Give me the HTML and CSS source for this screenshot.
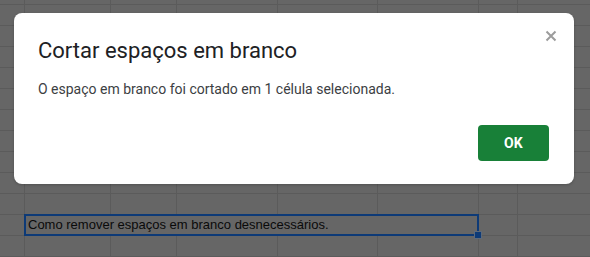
FILE: index.html
```html
<!DOCTYPE html>
<html lang="pt">
<head>
<meta charset="utf-8">
<title>Cortar espaços em branco</title>
<link rel="stylesheet" href="styles.css">
</head>
<body>
<div class="sheet">
  <div class="cell-selected">Como remover espaços em branco desnecessários.<span class="handle"></span></div>
</div>
<div class="dialog" role="dialog">
  <h1 class="dialog-title">Cortar espaços em branco</h1>
  <p class="dialog-body">O espaço em branco foi cortado em 1 célula selecionada.</p>
  <div class="dialog-actions"><button class="btn-ok">OK</button></div>
  <button class="dialog-close" aria-label="Fechar">
    <svg viewBox="0 0 12 12" width="12" height="12"><path d="M1.5 1.5 L10.5 10.5 M10.5 1.5 L1.5 10.5" stroke="#9c9c9c" stroke-width="2" fill="none"/></svg>
  </button>
</div>
</body>
</html>
```
FILE: styles.css
```css
html, body {
  margin: 0;
  padding: 0;
  width: 590px;
  height: 257px;
  overflow: hidden;
  background: #666666;
}
.sheet {
  width: 590px;
  height: 257px;
  display: grid;
  grid-template-columns: 25px 86px 66px 101px 100px 101px 39px 1fr;
  grid-template-rows: 4px repeat(12, 21px) 1fr;
  background-color: #666666;
  background-image:
    linear-gradient(#5b5b5b, #5b5b5b),
    linear-gradient(#5b5b5b, #5b5b5b),
    linear-gradient(#5b5b5b, #5b5b5b),
    linear-gradient(#5b5b5b, #5b5b5b),
    linear-gradient(#5b5b5b, #5b5b5b),
    linear-gradient(#5b5b5b, #5b5b5b),
    linear-gradient(#5b5b5b, #5b5b5b),
    repeating-linear-gradient(to bottom, #5b5b5b 0 1px, transparent 1px 21px);
  background-size: 1px 100%, 1px 100%, 1px 100%, 1px 100%, 1px 100%, 1px 100%, 1px 100%, 100% 100%;
  background-position: 24px 0, 110px 0, 176px 0, 277px 0, 377px 0, 478px 0, 517px 0, 0 4px;
  background-repeat: no-repeat, no-repeat, no-repeat, no-repeat, no-repeat, no-repeat, no-repeat, repeat-y;
}
.cell-selected {
  grid-column: 2 / 7;
  grid-row: 12;
  position: relative;
  margin: 0 0 0 -1px;
  height: 22px;
  box-sizing: border-box;
  border: 2px solid #0d3a77;
  background: #666666;
  font-family: "Liberation Sans", Arial, sans-serif;
  font-size: 13px;
  line-height: 17px;
  color: #0a0a0a;
  padding-left: 2px;
  white-space: nowrap;
}
.handle {
  position: absolute;
  right: -5px;
  bottom: -5px;
  width: 6px;
  height: 6px;
  background: #0d3a77;
  border: 1px solid #5e6a7a;
}
.dialog {
  position: absolute;
  left: 14px;
  top: 13px;
  width: 560px;
  height: 171px;
  box-sizing: border-box;
  background: #ffffff;
  border-radius: 8px;
  padding: 24px 25px 23px 24px;
  display: flex;
  flex-direction: column;
  font-family: Roboto, "Noto Sans", Arial, sans-serif;
  box-shadow: 0 1px 3px rgba(0,0,0,0.2);
}
.dialog-title {
  margin: 0;
  font-size: 22px;
  line-height: 28px;
  font-weight: 400;
  color: #202124;
}
.dialog-body {
  margin: 14px 0 0 0;
  font-size: 14px;
  line-height: 20px;
  color: #3c4043;
}
.dialog-actions {
  margin-top: auto;
  display: flex;
  justify-content: flex-end;
}
.btn-ok {
  width: 71px;
  height: 36px;
  border: none;
  border-radius: 4px;
  background: #188038;
  color: #ffffff;
  font-family: Roboto, "Noto Sans", Arial, sans-serif;
  font-weight: 700;
  font-size: 14px;
  letter-spacing: 0.3px;
  padding: 0;
}
.dialog-close {
  position: absolute;
  top: 17px;
  right: 17px;
  width: 12px;
  height: 12px;
  padding: 0;
  border: none;
  background: none;
  display: block;
}
.dialog-close svg {
  display: block;
}
```
